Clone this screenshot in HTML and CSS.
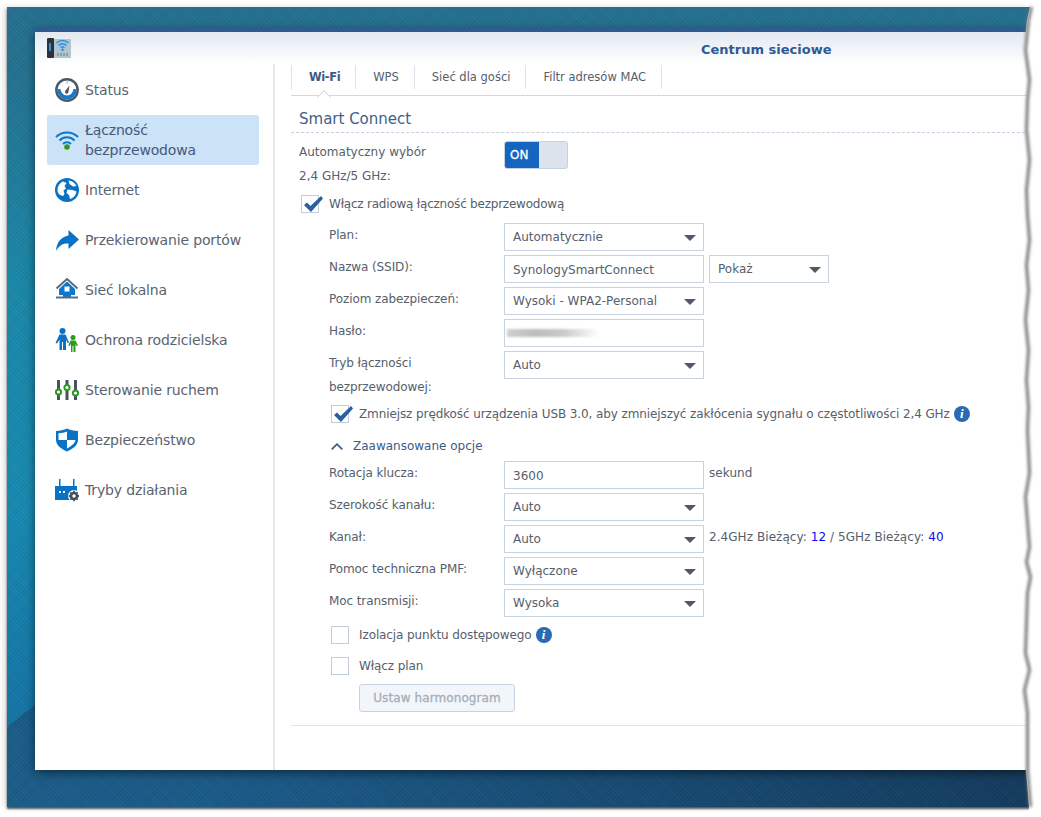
FILE: index.html
```html
<!DOCTYPE html>
<html lang="pl">
<head>
    <meta charset="UTF-8">
    <title>Centrum sieciowe</title>
    <link rel="stylesheet" href="styles.css">
</head>
<body>
<div class="desktop">
    <div class="window">
        <div class="titlebar">
            <svg class="app-icon" width="24" height="20" viewBox="0 0 24 20">
                <rect x="6" y="1" width="18" height="19" rx="1" fill="#b4c4cc"/>
                <rect x="0" y="0" width="7" height="20" rx="1" fill="#2b3238"/>
                <rect x="2" y="5" width="2" height="8" fill="#2a8fe8"/>
                <path d="M9.500 5a8.500 8.500 0 0 1 12 0M11.500 7.500a5.500 5.500 0 0 1 8 0M13.500 9.700a3 3 0 0 1 4 0" fill="none" stroke="#1f96ec" stroke-width="1.400"/>
                <circle cx="15.500" cy="11.800" r="1.300" fill="#1f96ec"/>
                <path d="M11 15v3M14 15v3M17 15v3M20 15v3" stroke="#4f86a5" stroke-width="1"/>
            </svg>
            <div class="window-title">Centrum sieciowe</div>
        </div>
        <div class="window-body">
            <div class="sidebar">
                <div class="nav-item">
                    <svg class="nav-icon" width="24" height="24" viewBox="0 0 24 24">
                        <circle cx="12" cy="12" r="10" fill="#fff"/>
                        <path d="M2.500 11h3a6.500 6.500 0 0 0 13 0h3v1a9.500 9.500 0 0 1-19 0z" fill="#1a78c8"/>
                        <circle cx="12" cy="12" r="10.700" fill="none" stroke="#47596b" stroke-width="2.400"/>
                        <path d="M12 2.500v3" stroke="#9aa6b2" stroke-width="1"/>
                        <path d="M14.500 7.500L13.500 14a1.800 1.800 0 1 1-3-1.500z" fill="#47596b"/>
                    </svg>
                    <span>Status</span>
                </div>
                <div class="nav-item active">
                    <svg class="nav-icon" width="24" height="24" viewBox="0 0 24 24">
                        <path d="M1 9a15.500 15.500 0 0 1 22 0M4.500 12.500a10.500 10.500 0 0 1 15 0M8 16a5.500 5.500 0 0 1 8 0" fill="none" stroke="#0a78c8" stroke-width="2"/>
                        <circle cx="12" cy="19" r="2.800" fill="#2c9a1e"/>
                    </svg>
                    <span>Łączność<br>bezprzewodowa</span>
                </div>
                <div class="nav-item">
                    <svg class="nav-icon" width="24" height="24" viewBox="0 0 24 24">
                        <circle cx="12" cy="12" r="12" fill="#0a72c4"/>
                        <path d="M2.500 12c0-3.500 2-7 5.500-8.500l3.500 1.500-2 3 1.500 2.500-2.500 2 1 3.500-1.500 2C5 17.500 2.500 15.500 2.500 12z" fill="#fff"/>
                        <path d="M13.500 2.500c3.500.3 6.500 2.500 8 5.500l-3.500.5-3.500-2.500zM12.500 11.500l5 .5 4 1.500c-.5 3.500-3 6.500-6.500 7.500l-1-4-2.500-2z" fill="#fff"/>
                    </svg>
                    <span>Internet</span>
                </div>
                <div class="nav-item">
                    <svg class="nav-icon" width="24" height="24" viewBox="0 0 24 24">
                        <path d="M13.500 2L24 11.500 13.500 21v-5.500C8 15 4 17.500 1 23c.5-8 4.500-14 12.500-15.500z" fill="#0a72c4"/>
                    </svg>
                    <span>Przekierowanie portów</span>
                </div>
                <div class="nav-item">
                    <svg class="nav-icon" width="24" height="24" viewBox="0 0 24 24">
                        <path d="M1.500 10.500L12 1l10.500 9.500" fill="none" stroke="#5c6c7c" stroke-width="2"/>
                        <path d="M4 11l8-7.500 8 7.500v6H4z" fill="#0a78d0"/>
                        <path d="M9.500 8.500h5v5h-5z" fill="#fff"/>
                        <path d="M8 17h8v3H8z" fill="#0a78d0"/>
                        <path d="M1 19.500h22" stroke="#5c6c7c" stroke-width="2"/>
                    </svg>
                    <span>Sieć lokalna</span>
                </div>
                <div class="nav-item">
                    <svg class="nav-icon" width="24" height="24" viewBox="0 0 24 24">
                        <circle cx="7.500" cy="3" r="3" fill="#0a72c4"/>
                        <path d="M4.500 6.500h6l3.500 8-1.500.5-1.500-3.500V22H8v-8H7v8H4.500v-10.500L2 15.500.5 15z" fill="#0a72c4"/>
                        <circle cx="18" cy="9.500" r="2.500" fill="#2c9a1e"/>
                        <path d="M15.500 12.500h5l2.500 5-1.300.5-1.200-2V24H18.500v-6h-1v6h-1.500v-8l-1.500 2-1.200-.5z" fill="#2c9a1e"/>
                    </svg>
                    <span>Ochrona rodzicielska</span>
                </div>
                <div class="nav-item">
                    <svg class="nav-icon" width="24" height="24" viewBox="0 0 24 24">
                        <path d="M3.500 2v20M12 2v20M20.500 2v20" stroke="#47525e" stroke-width="3"/>
                        <g fill="#fff" stroke="#2c9a1e" stroke-width="2">
                            <circle cx="3.500" cy="14" r="2.600"/>
                            <circle cx="12" cy="9.500" r="2.600"/>
                            <circle cx="20.500" cy="15" r="2.600"/>
                        </g>
                    </svg>
                    <span>Sterowanie ruchem</span>
                </div>
                <div class="nav-item">
                    <svg class="nav-icon" width="24" height="24" viewBox="0 0 24 24">
                        <path d="M1 3c4 0 8-1 11-2.500C15 2 19 3 23 3v9c0 5-5 9-11 11.500C6 21 1 17 1 12z" fill="#0a72c4"/>
                        <path d="M12 3.500c-2.500 1-5 1.500-8.500 1.800V12H12zM12 12v8.500c4-2 8-5 8.500-8.500z" fill="#fff"/>
                    </svg>
                    <span>Bezpieczeństwo</span>
                </div>
                <div class="nav-item">
                    <svg class="nav-icon" width="24" height="24" viewBox="0 0 24 24">
                        <path d="M4 1h1.500v7H18V1h1.500v7H22v14H0V8h4z" fill="#0a72c4"/>
                        <path d="M4 13h2v2H4zM8 13h2v2H8z" fill="#fff"/>
                        <circle cx="19" cy="18" r="6" fill="#fff"/>
                        <circle cx="19" cy="18" r="3" fill="none" stroke="#47525e" stroke-width="2.600"/>
                        <path d="M19 12.800v2M19 21.200v2M13.800 18h2M22.200 18h2M15.300 14.300l1.400 1.400M21.300 20.300l1.400 1.400M15.300 21.700l1.400-1.400M21.300 15.700l1.400-1.400" stroke="#47525e" stroke-width="1.800"/>
                    </svg>
                    <span>Tryby działania</span>
                </div>
            </div>
            <div class="main">
                <div class="tabs">
                    <div class="tab current">Wi-Fi</div>
                    <div class="tab">WPS</div>
                    <div class="tab">Sieć dla gości</div>
                    <div class="tab">Filtr adresów MAC</div>
                </div>
                <div class="section-head">Smart Connect</div>
                <div class="form">
                    <div class="switch-row">
                        <div class="switch-label">Automatyczny wybór<br>2,4 GHz/5 GHz:</div>
                        <div class="switch">
                            <div class="switch-on">ON</div>
                        </div>
                    </div>
                    <div class="check-row top-check">
                        <div class="box"><svg class="tick" width="20" height="17" viewBox="0 0 20 17"><polygon points="1,9 4,6.500 7.500,10 18,0 20,2.500 8,16" /></svg></div>
                        <span>Włącz radiową łączność bezprzewodową</span>
                    </div>

                    <div class="indent">
                        <div class="row">
                            <div class="label">Plan:</div>
                            <div class="field select">Automatycznie</div>
                        </div>
                        <div class="row">
                            <div class="label">Nazwa (SSID):</div>
                            <div class="field">SynologySmartConnect</div>
                            <div class="field select small">Pokaż</div>
                        </div>
                        <div class="row">
                            <div class="label">Poziom zabezpieczeń:</div>
                            <div class="field select">Wysoki - WPA2-Personal</div>
                        </div>
                        <div class="row">
                            <div class="label">Hasło:</div>
                            <div class="field"><div class="smudge"></div></div>
                        </div>
                        <div class="row">
                            <div class="label">Tryb łączności<br>bezprzewodowej:</div>
                            <div class="field select">Auto</div>
                        </div>

                        <div class="check-row usb-check">
                            <div class="box"><svg class="tick" width="20" height="17" viewBox="0 0 20 17"><polygon points="1,9 4,6.500 7.500,10 18,0 20,2.500 8,16" /></svg></div>
                            <span>Zmniejsz prędkość urządzenia USB 3.0, aby zmniejszyć zakłócenia sygnału o częstotliwości 2,4 GHz</span>
                            <div class="info">i</div>
                        </div>

                        <div class="advanced">
                            <svg width="12" height="7" viewBox="0 0 12 7"><path d="M.7 6.300L6 1.200l5.300 5.100" fill="none" stroke="#3b5f8f" stroke-width="1.800"/></svg>
                            <span>Zaawansowane opcje</span>
                        </div>

                        <div class="row">
                            <div class="label">Rotacja klucza:</div>
                            <div class="field">3600</div>
                            <div class="after">sekund</div>
                        </div>
                        <div class="row">
                            <div class="label">Szerokość kanału:</div>
                            <div class="field select">Auto</div>
                        </div>
                        <div class="row">
                            <div class="label">Kanał:</div>
                            <div class="field select">Auto</div>
                            <div class="after">2.4GHz Bieżący: <span class="num">12</span> / 5GHz Bieżący: <span class="num">40</span></div>
                        </div>
                        <div class="row">
                            <div class="label">Pomoc techniczna PMF:</div>
                            <div class="field select">Wyłączone</div>
                        </div>
                        <div class="row">
                            <div class="label">Moc transmisji:</div>
                            <div class="field select">Wysoka</div>
                        </div>

                        <div class="check-row iso-check">
                            <div class="box"></div>
                            <span>Izolacja punktu dostępowego</span>
                            <div class="info">i</div>
                        </div>
                        <div class="check-row plan-check">
                            <div class="box"></div>
                            <span>Włącz plan</span>
                        </div>
                        <div class="btn">Ustaw harmonogram</div>
                    </div>
                </div>
            </div>
        </div>
    </div>
</div>

<!-- torn edge of the screenshot, lies over everything on the right -->
<svg class="tear" width="41" height="817" viewBox="1000 0 41 817">
    <defs>
        <filter id="soft" x="-50%" y="-5%" width="200%" height="110%"><feGaussianBlur stdDeviation="1.500"/></filter>
    </defs>
    <polygon fill="#fff" points="1031,0 1030,7 1027,20 1024,50 1028,80 1026,100 1025,130 1028,160 1025,190 1026,215 1028,240 1025,265 1027,290 1024,320 1027,350 1025,380 1027,407 1026,430 1028,473 1024,497 1028,547 1025,562 1029,577 1026,593 1024,653 1028,670 1023,690 1026,713 1026,770 1029,807 1029,817 1041,817 1041,0"/>
    <polyline fill="none" stroke="#777" stroke-width="3" filter="url(#soft)" transform="translate(1.500 0)" points="1030,7 1027,20 1024,50 1028,80 1026,100 1025,130 1028,160 1025,190 1026,215 1028,240 1025,265 1027,290 1024,320 1027,350 1025,380 1027,407 1026,430 1028,473 1024,497 1028,547 1025,562 1029,577 1026,593 1024,653 1028,670 1023,690 1026,713 1026,770 1029,807"/>
</svg>
</body>
</html>
```

FILE: styles.css
```css
* {
    box-sizing: border-box;
}

body {
    margin: 0;
    width: 1041px;
    height: 817px;
    overflow: hidden;
    position: relative;
    background: #fff;
    font-family: "DejaVu Sans", sans-serif;
    font-size: 12px;
    color: #56606c;
}

.desktop {
    margin: 7px 0 0 7px;
    width: 1023px;
    height: 800px;
    padding: 21px 0 0 28px;
    overflow: hidden;
    background:
        repeating-linear-gradient(45deg, rgba(255, 255, 255, 0.03) 0 1px, transparent 1px 3px),
        repeating-linear-gradient(-45deg, rgba(0, 0, 0, 0.04) 0 1px, transparent 1px 3px),
        linear-gradient(to bottom right, transparent 50%, #1a5b86 50%) 0 698px / 28px 22px no-repeat,
        linear-gradient(to right, #1b5c87, #1a5a88 20%, #143b5d) 0 100% / 100% 80px no-repeat,
        linear-gradient(#246f8e, #23718f 8%, #1b87a8 35%, #1789b0 62%, #1574a6 88%);
    box-shadow: 0 2px 2px #555, -3px 0 6px #ddd;
}

.window {
    width: 1010px;
    height: 742px;
    border-top: 4px solid #2f5a90;
    background: #fff;
    box-shadow: 0 3px 9px rgba(0, 0, 0, 0.5);
}

.titlebar {
    height: 32px;
    display: flex;
    align-items: flex-start;
    padding: 6px 0 0 12px;
    background: linear-gradient(#e3e8f1, #fff);
}

.app-icon {
    display: block;
}

.window-title {
    margin: 4px 0 0 630px;
    font-size: 13px;
    font-weight: bold;
    color: #2f5a90;
}

.window-body {
    display: flex;
    height: 706px;
}

/* left menu */
.sidebar {
    width: 240px;
    padding: 1px 14px 0 12px;
    border-right: 2px solid #e4e8ee;
}

.nav-item {
    height: 50px;
    display: flex;
    align-items: center;
    gap: 6px;
    padding-left: 8px;
    font-size: 14px;
    line-height: 20px;
    letter-spacing: -0.15px;
    color: #5a6470;
    border-radius: 3px;
}

.nav-item.active {
    background: #cce2f6;
    color: #45597c;
}

.nav-icon {
    flex: none;
}

/* right side */
.main {
    flex: 1;
    padding-left: 16px;
}

.tabs {
    height: 32px;
    display: flex;
    align-items: flex-start;
    padding-top: 1px;
    border-bottom: 1px solid #d4d7db;
    font-size: 11.5px;
}

.tab {
    height: 24px;
    line-height: 24px;
    padding: 0 15px 0 17px;
    border-right: 1px solid #dbe3ec;
    white-space: nowrap;
}

.tab:first-child {
    border-left: 1px solid #dbe3ec;
}

.tab.current {
    position: relative;
    font-weight: bold;
    letter-spacing: -0.4px;
    color: #3b5a85;
}

.tab.current::after {
    content: "";
    position: absolute;
    left: 27px;
    top: 27px;
    width: 9px;
    height: 9px;
    background: #fff;
    border-top: 1px solid #d4d7db;
    border-left: 1px solid #d4d7db;
    transform: rotate(45deg);
}

.section-head {
    height: 37px;
    padding: 14px 0 0 8px;
    font-size: 15px;
    line-height: 18px;
    color: #3d5f8a;
    border-bottom: 1px dashed #c3d0e0;
}

.form {
    padding: 7px 0 13px 8px;
    border-bottom: 1px solid #e2e3e5;
    line-height: 24px;
}

.switch-row {
    display: flex;
    height: 48px;
}

.switch-label {
    width: 205px;
}

.switch {
    width: 64px;
    height: 28px;
    margin-top: 1px;
    background: #dce3ed;
    border: 1px solid #c6d1e0;
    border-radius: 3px;
    overflow: hidden;
}

.switch-on {
    width: 34px;
    height: 26px;
    line-height: 26px;
    padding-left: 5px;
    background: #1464c0;
    color: #fff;
    -webkit-text-stroke: 0.3px #fff;
}

.check-row {
    display: flex;
    align-items: center;
    height: 20px;
    letter-spacing: -0.1px;
}

.top-check {
    margin: 6px 0 0 2px;
    letter-spacing: -0.22px;
}

.usb-check {
    margin-top: 5px;
}

.iso-check {
    margin-top: 8px;
}

.plan-check {
    margin-top: 11px;
}

.box {
    width: 18px;
    height: 18px;
    margin-right: 10px;
    position: relative;
    border: 1px solid #c2ccda;
    background: #fff;
    flex: none;
}

.tick {
    position: absolute;
    left: 1px;
    top: 0;
    fill: #2d5f9e;
}

.info {
    width: 16px;
    height: 16px;
    margin-left: 4px;
    border-radius: 50%;
    background: #2a69b4;
    color: #fff;
    font: italic bold 13px/16px "Liberation Serif", serif;
    text-align: center;
}

.indent {
    padding-left: 30px;
    margin-top: 9px;
}

.indent .check-row {
    margin-left: 2px;
}

.row {
    display: flex;
    margin-bottom: 4px;
}

.label {
    width: 175px;
    letter-spacing: -0.1px;
}

.field {
    width: 200px;
    height: 28px;
    line-height: 28px;
    padding-left: 8px;
    border: 1px solid #c8d3e2;
    background: #fff;
    flex: none;
}

.select {
    position: relative;
    line-height: 26px;
}

.select::after {
    content: "";
    position: absolute;
    right: 7px;
    top: 11px;
    border-left: 6px solid transparent;
    border-right: 6px solid transparent;
    border-top: 6px solid #505a66;
}

.field.small {
    width: 120px;
    margin-left: 5px;
}

.after {
    margin-left: 5px;
    letter-spacing: 0.06px;
}

.num {
    color: #0a0af0;
}

.smudge {
    width: 92px;
    height: 8px;
    margin: 9px 0 0 -6px;
    background: linear-gradient(to right, #d0d0d0, #bdbdbd 30%, #c8c8c8 60%, #fff);
    filter: blur(1px);
}

.advanced {
    display: flex;
    align-items: center;
    gap: 10px;
    height: 20px;
    margin: 12px 0 5px 2px;
    color: #3f5a85;
}

.btn {
    width: 156px;
    height: 28px;
    line-height: 26px;
    margin: 8px 0 0 30px;
    text-align: center;
    letter-spacing: 0.1px;
    color: #a4aeb9;
    background: #f2f6fb;
    border: 1px solid #c8d3e2;
    border-radius: 3px;
    -webkit-text-stroke: 0.3px #a4aeb9;
}

.tear {
    position: absolute;
    left: 1000px;
    top: 0;
}
```
